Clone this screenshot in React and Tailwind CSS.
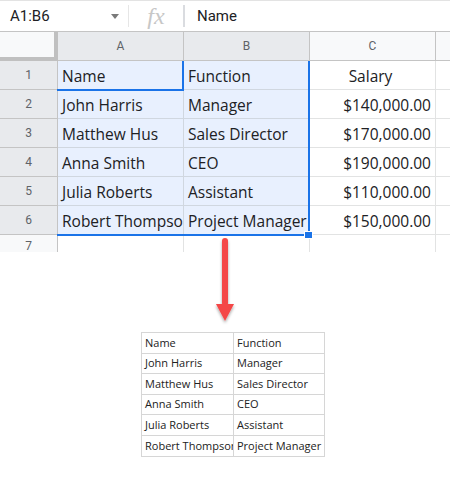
import React from "react";

const rows = [
  ["Name", "Function", "Salary"],
  ["John Harris", "Manager", "$140,000.00"],
  ["Matthew Hus", "Sales Director", "$170,000.00"],
  ["Anna Smith", "CEO", "$190,000.00"],
  ["Julia Roberts", "Assistant", "$110,000.00"],
  ["Robert Thompson", "Project Manager", "$150,000.00"],
];

export default function App() {
  return (
    <div className="w-[450px] h-[504px] bg-white overflow-hidden relative">
      {/* Formula bar */}
      <div className="h-[32px] flex items-center border-t border-t-[#e3e3e3] border-b border-b-[#c4c4c4] font-['Roboto',sans-serif] text-[15px] text-[#202124]">
        <div className="w-[128px] h-full flex items-center pl-[10px] pr-[8px] justify-between">
          <span>A1:B6</span>
          <svg width="8" height="5" viewBox="0 0 8 5" className="mr-[1px]"><path d="M0 0h8L4 5z" fill="#7a7a7a" /></svg>
        </div>
        <div className="w-[1px] h-[22px] bg-[#e6e6e6]" />
        <div className="w-[54px] flex items-center justify-center">
          <span className="font-['Liberation_Serif',serif] italic text-[24px] text-[#c7c7c7] leading-none">fx</span>
        </div>
        <div className="w-[2px] h-[22px] bg-[#dadce0]" />
        <div className="pl-[12px]">Name</div>
      </div>

      {/* Grid */}
      <div className="relative">
        <div className="grid grid-cols-[58px_126px_126px_126px_1fr] font-['Roboto',sans-serif]">
          {/* header row */}
          <div className="h-[29px] bg-[#f8f9fa] border-r-[4px] border-b-[4px] border-[#c0c0c0]" />
          <div className="h-[29px] bg-[#e8eaed] border-r border-r-[#c4c4c4] border-b border-b-[#c4c4c4] flex items-center justify-center text-[12px] text-[#5f6368]">A</div>
          <div className="h-[29px] bg-[#e8eaed] border-r border-r-[#c4c4c4] border-b border-b-[#c4c4c4] flex items-center justify-center text-[12px] text-[#5f6368]">B</div>
          <div className="h-[29px] bg-[#f8f9fa] border-r border-r-[#c4c4c4] border-b border-b-[#c4c4c4] flex items-center justify-center text-[12px] text-[#5f6368]">C</div>
          <div className="h-[29px] bg-[#f8f9fa] border-b border-b-[#c4c4c4]" />

          {rows.map((r, i) => (
            <React.Fragment key={i}>
              <div className="h-[29px] bg-[#e8eaed] border-r border-r-[#c4c4c4] border-b border-b-[#c4c4c4] flex items-center justify-center text-[12px] text-[#5f6368]">{i + 1}</div>
              <div className="h-[29px] bg-[#e8f0fe] border-r border-r-[#d0d7e0] border-b border-b-[#d0d7e0] flex items-center pl-[4px] pt-[3px] overflow-hidden whitespace-nowrap font-['Open_Sans',sans-serif] text-[15.5px] text-[#202124]">{r[0]}</div>
              <div className="h-[29px] bg-[#e8f0fe] border-r border-r-[#d0d7e0] border-b border-b-[#d0d7e0] flex items-center pl-[4px] pt-[3px] overflow-hidden whitespace-nowrap font-['Open_Sans',sans-serif] text-[15.5px] text-[#202124]">{r[1]}</div>
              <div className={"h-[29px] border-r border-r-[#e2e3e3] border-b border-b-[#e2e3e3] flex items-center pr-[4px] pt-[3px] overflow-hidden whitespace-nowrap font-['Open_Sans',sans-serif] text-[15.5px] text-[#202124] " + (i === 0 ? "justify-center" : "justify-end")}>{r[2]}</div>
              <div className="h-[29px] border-b border-b-[#e2e3e3]" />
            </React.Fragment>
          ))}

          <div className="h-[17px] bg-[#f8f9fa] border-r border-r-[#c4c4c4] flex items-start justify-center pt-[5px] text-[12px] text-[#5f6368] leading-none">7</div>
          <div className="h-[17px] border-r border-r-[#e2e3e3]" />
          <div className="h-[17px] border-r border-r-[#e2e3e3]" />
          <div className="h-[17px] border-r border-r-[#e2e3e3]" />
          <div className="h-[17px]" />
        </div>

        {/* active cell A1 border */}
        <div className="absolute left-[57px] top-[29px] w-[127px] h-[30px] border-r-2 border-b-2 border-[#1a73e8] pointer-events-none" />
        {/* range border */}
        <div className="absolute left-[57px] top-[29px] w-[253px] h-[175px] border-r-2 border-b-2 border-[#1a73e8] pointer-events-none" />
        {/* fill handle */}
        <div className="absolute left-[304px] top-[199px] w-[9px] h-[8px] bg-[#1a73e8] border border-white" />
      </div>

      {/* Arrow (overlaps row 7) */}
      <div className="relative mt-[-15px] pl-[210px] h-[95px]">
        <svg width="32" height="95" viewBox="0 0 32 95">
          <defs>
            <filter id="sh" x="-50%" y="-20%" width="200%" height="150%">
              <feDropShadow dx="0" dy="2" stdDeviation="1.6" floodColor="#000" floodOpacity="0.35" />
            </filter>
          </defs>
          <g filter="url(#sh)">
            <rect x="12" y="1" width="6" height="68" rx="3" fill="#f44646" />
            <path d="M6 67 H24 L15 84 Z" fill="#f44646" />
          </g>
        </svg>
      </div>

      {/* Result table */}
      <div className="ml-[141px] w-[184px] border-t border-l border-[#d6d6d6] font-['Open_Sans',sans-serif] text-[11px] text-[#222]">
        {rows.map((r, i) => (
          <div key={i} className="grid grid-cols-[92px_91px] h-[20.6px]">
            <div className="border-r border-b border-[#d6d6d6] flex items-center pl-[3px] overflow-hidden whitespace-nowrap">{r[0]}</div>
            <div className="border-r border-b border-[#d6d6d6] flex items-center pl-[3px] overflow-hidden whitespace-nowrap">{r[1]}</div>
          </div>
        ))}
      </div>
    </div>
  );
}
